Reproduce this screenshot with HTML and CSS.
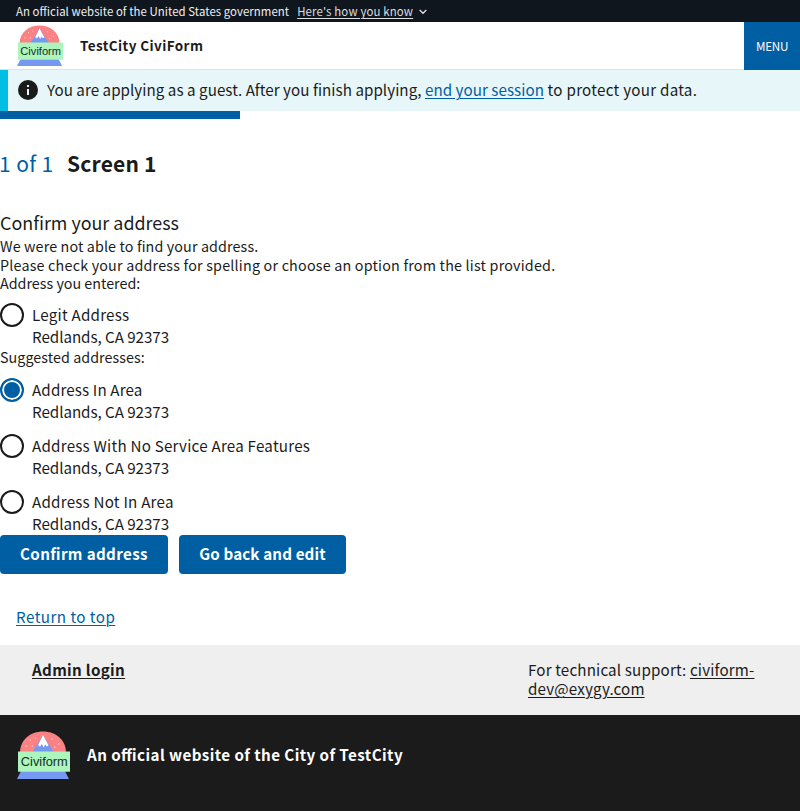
FILE: index.html
```html
<!DOCTYPE html>
<html lang="en">
<head>
<meta charset="utf-8">
<title>TestCity CiviForm</title>
<link rel="stylesheet" href="styles.css">
</head>
<body>
<div class="gov-banner">
  <span class="gov-text">An official website of the United States government</span>
  <a class="gov-link">Here's how you know</a>
  <svg class="chevron" viewBox="0 0 8 6"><path d="m.7 1 3.300 3.300L7.300 1" fill="none" stroke="#dcdee0" stroke-width="1.400"/></svg>
</div>
<header class="header">
  <svg class="header-logo" viewBox="0 0 52 48" preserveAspectRatio="none">
    <path d="M3 21C3 9 13 .5 25.500 .5S48 9 48 21z" fill="#fa8285"/>
    <path d="M15 21 25.500 4 36 21z" fill="#7598f0"/>
    <path d="M20 15.500 25.500 4 31 14.500l-2 1-1.200-2-1.600 2.800-2-3.300-1.700 3-1-2z" fill="#fff"/>
    <g fill="#ffd5d2"><circle cx="13" cy="9" r=".7"/><circle cx="18" cy="7" r=".6"/><circle cx="9" cy="15" r=".7"/><circle cx="15" cy="15" r=".7"/><circle cx="34.500" cy="8" r=".7"/><circle cx="41" cy="13" r=".7"/><circle cx="37" cy="16" r=".7"/></g>
    <path d="M4.500 39h42L51 48H0z" fill="#7598f0"/>
    <path d="M1 20.500h51v20.300H1z" fill="#adf5bd"/>
    <text x="26.800" y="35" text-anchor="middle" textLength="46" lengthAdjust="spacingAndGlyphs" class="logo-text">Civiform</text>
  </svg>
  <span class="site-name">TestCity CiviForm</span>
  <button class="menu">MENU</button>
</header>
<div class="alert">
  <svg class="info" viewBox="0 0 20 20"><circle cx="10" cy="10" r="10" fill="#1b1b1b"/><path d="M9 5h2v2H9zM9 9h2v6H9z" fill="#e7f6f8"/></svg>
  <p class="alert-text">You are applying as a guest. After you finish applying, <a class="link">end your session</a><span class="alert-end"> to protect your data.</span></p>
</div>
<div class="progress"></div>
<main>
  <h1 class="title"><span class="step">1 of 1</span><span class="screen">Screen 1</span></h1>
  <h2 class="subtitle">Confirm your address</h2>
  <p class="note note-one">We were not able to find your address.</p>
  <p class="note note-two">Please check your address for spelling or choose an option from the list provided.</p>
  <p class="note note-three">Address you entered:</p>
  <label class="option"><span class="radio"></span><span class="address"><span class="street">Legit Address</span><br>Redlands, CA 92373</span></label>
  <p class="note suggested">Suggested addresses:</p>
  <label class="option"><span class="radio checked"></span><span class="address"><span class="street in-area">Address In Area</span><br>Redlands, CA 92373</span></label>
  <label class="option"><span class="radio"></span><span class="address"><span class="street">Address With No Service Area Features</span><br>Redlands, CA 92373</span></label>
  <label class="option"><span class="radio"></span><span class="address"><span class="street">Address Not In Area</span><br>Redlands, CA 92373</span></label>
  <div class="actions"><button class="button confirm">Confirm address</button><button class="button back">Go back and edit</button></div>
</main>
<div class="return"><a class="link">Return to top</a></div>
<section class="support">
  <a class="admin">Admin login</a>
  <p class="contact">For technical support: <a>civiform-<br>dev@exygy.com</a></p>
</section>
<footer class="footer">
  <svg class="footer-logo" viewBox="0 0 52 48" preserveAspectRatio="none">
    <path d="M3 21C3 9 13 .5 25.500 .5S48 9 48 21z" fill="#fa8285"/>
    <path d="M15 21 25.500 4 36 21z" fill="#7598f0"/>
    <path d="M20 15.500 25.500 4 31 14.500l-2 1-1.200-2-1.600 2.800-2-3.300-1.700 3-1-2z" fill="#fff"/>
    <g fill="#ffd5d2"><circle cx="13" cy="9" r=".7"/><circle cx="18" cy="7" r=".6"/><circle cx="9" cy="15" r=".7"/><circle cx="15" cy="15" r=".7"/><circle cx="34.500" cy="8" r=".7"/><circle cx="41" cy="13" r=".7"/><circle cx="37" cy="16" r=".7"/></g>
    <path d="M4.500 39h42L51 48H0z" fill="#7598f0"/>
    <path d="M1 20.500h51v20.300H1z" fill="#adf5bd"/>
    <text x="26.800" y="35" text-anchor="middle" textLength="46" lengthAdjust="spacingAndGlyphs" class="logo-text">Civiform</text>
  </svg>
  <span class="footer-text">An official website of the City of TestCity</span>
</footer>
</body>
</html>
```
FILE: styles.css
```css
* { box-sizing: border-box; }
body { margin: 0; background: #fff; color: #1b1b1b; font-family: "Noto Sans CJK SC", "Noto Sans", sans-serif; font-size: 15.18px; line-height: 22px; font-feature-settings: "liga" 1; }
h1, h2, p { margin: 0; font-weight: 400; }
button { border: 0; padding: 0; font: inherit; color: #fff; background: #005ea2; }
svg { display: block; flex: none; }
.logo-text { font-family: "Liberation Sans", sans-serif; font-size: 13.2px; fill: #172e25; }
a { text-decoration: underline; text-decoration-thickness: 1px; text-underline-offset: 2px; }
.link { color: #005ea2; }
.gov-banner { height: 22px; padding-left: 16px; display: flex; align-items: center; background: #10161d; color: #f0f0f0; font-size: 11.4px; white-space: nowrap; }
.gov-text { letter-spacing: .06px; }
.gov-link { margin-left: 8px; color: #dcdee0; letter-spacing: .16px; }
.chevron { width: 8px; height: 6px; margin: 2px 0 0 6px; }
.header { height: 48px; display: flex; align-items: center; border-bottom: 1px solid #dfe1e2; }
.header-logo { width: 46px; height: 41px; margin-left: 17px; }
.site-name { margin-left: 17px; padding-bottom: 2px; font-size: 13.5px; font-weight: 700; letter-spacing: .4px; }
.menu { width: 56px; height: 48px; margin: 0 0 -1px auto; font-size: 11.7px; letter-spacing: -.3px; }
.alert { height: 41px; display: flex; align-items: center; padding-left: 10px; border-left: 8px solid #00bde3; background: #e7f6f8; }
.info { width: 20px; height: 20px; margin-bottom: 1px; }
.alert-text { margin-left: 9px; padding-bottom: 3px; white-space: nowrap; letter-spacing: .04px; }
.alert-end { letter-spacing: .26px; }
.progress { width: 240px; height: 8px; background: #005ea2; }
.title { display: flex; height: 32px; margin-top: 28px; line-height: 32px; font-size: 21px; }
.step { color: #005ea2; width: 67px; margin-left: -1px; margin-right: 1px; letter-spacing: .4px; }
.screen { font-weight: 700; letter-spacing: .2px; }
.subtitle { margin-top: 30px; height: 26px; line-height: 26px; font-size: 17.9px; }
.note { height: 19px; line-height: 19px; font-size: 14.32px; white-space: nowrap; }
.note-one { margin-top: 1px; letter-spacing: .12px; }
.note-two { letter-spacing: .2px; }
.note-three { height: 18px; line-height: 17px; }
.suggested { letter-spacing: .05px; line-height: 18px; }
.option { display: flex; gap: 8px; height: 44px; margin-top: 12px; }
.address { margin-top: -1px; letter-spacing: -.05px; }
.street { letter-spacing: .22px; }
.in-area { letter-spacing: .13px; }
.radio { width: 24px; height: 24px; margin-top: -1px; border: 2px solid #1b1b1b; border-radius: 50%; }
.radio.checked { border-color: #005ea2; background: #005ea2; box-shadow: inset 0 0 0 2px #fff; }
.note-three + .option { margin-top: 12px; }
.actions { display: flex; gap: 11px; }
.button { width: 168px; height: 39px; padding-bottom: 3px; border-radius: 4px; font-weight: 700; white-space: nowrap; letter-spacing: .36px; }
.back { width: 167px; letter-spacing: .13px; }
.return { height: 71px; padding: 31px 16px 0; letter-spacing: .46px; }
.support { height: 70px; padding: 15px 32px 0; display: flex; background: #efefef; line-height: 19px; }
.admin { width: 496px; font-weight: 700; letter-spacing: .32px; }
.contact { letter-spacing: .15px; }
.footer { height: 96px; display: flex; background: #1b1b1b; color: #fff; }
.footer-logo { width: 53px; height: 48px; margin: 16px 0 0 17px; }
.footer-text { margin: 28px 0 0 17px; font-weight: 700; letter-spacing: .43px; }
```
